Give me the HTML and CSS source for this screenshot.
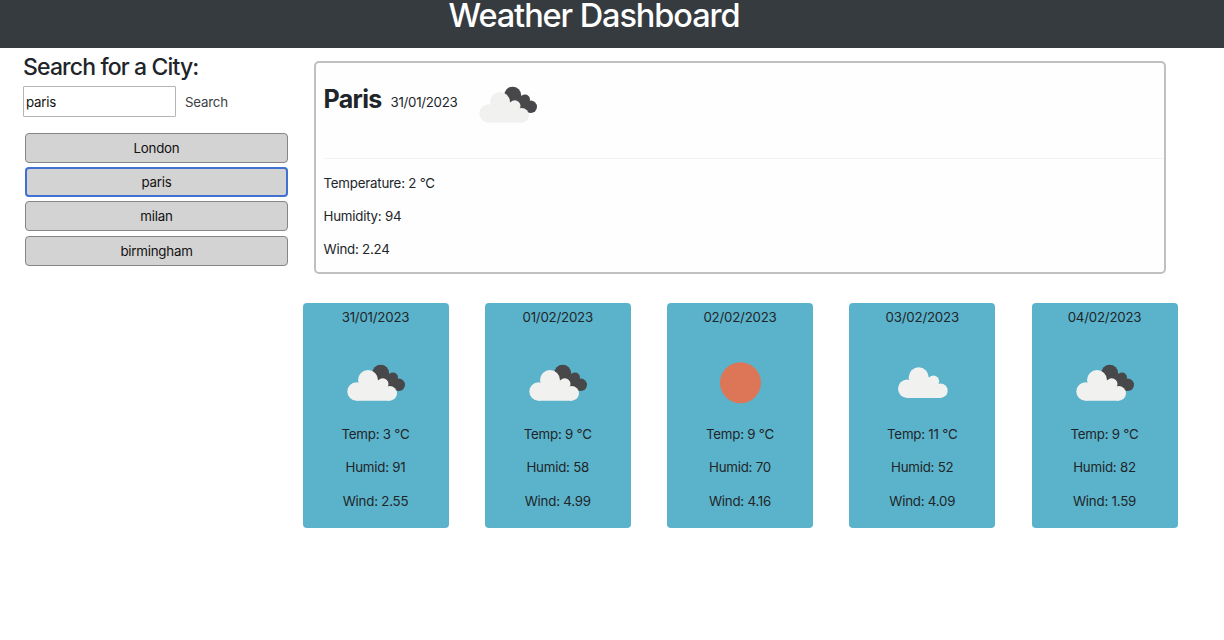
FILE: index.html
```html
<!DOCTYPE html>
<html lang="en">
<head>
<meta charset="utf-8">
<title>Weather Dashboard</title>
<link rel="stylesheet" href="styles.css">
</head>
<body>
<svg class="defs" aria-hidden="true">
  <symbol id="cloud" viewBox="0 0 83 83">
    <g fill="#f1f1ef"><circle cx="22.5" cy="50.5" r="9.2"/><circle cx="34" cy="39" r="10"/><circle cx="48.7" cy="43" r="5.8"/><circle cx="55.7" cy="52.4" r="7.3"/><path d="M22.5 59.7V44L34 38l14 2 3 7 5 5v7.7z"/></g>
  </symbol>
  <symbol id="clouds" viewBox="0 0 83 83">
    <g fill="#48484a"><circle cx="46.7" cy="32.2" r="8.5"/><circle cx="59" cy="36.5" r="5"/><circle cx="64.8" cy="43.8" r="6.2"/><path d="M43 36l10-4 6 2 5 6v9.5h-8z"/></g>
    <use href="#cloud" width="83" height="83"/>
  </symbol>
  <symbol id="sun" viewBox="0 0 83 83"><circle cx="41.5" cy="41.7" r="20.5" fill="#dc7657"/></symbol>
</svg>
<header class="header"><h1 class="title">Weather Dashboard</h1></header>
<main class="layout">
  <aside class="sidebar">
    <h2 class="search-title">Search for a City:</h2>
    <form class="search-form">
      <input class="search-input" type="text" value="paris">
      <button class="search-button" type="button">Search</button>
    </form>
    <div class="history">
      <button class="city">London</button>
      <button class="city active">paris</button>
      <button class="city">milan</button>
      <button class="city">birmingham</button>
    </div>
  </aside>
  <div class="content">
    <section class="today">
      <div class="today-head">
        <h2 class="today-city">Paris</h2>
        <span class="today-date">31/01/2023</span>
        <svg class="icon"><use href="#clouds"/></svg>
      </div>
      <div class="today-data">
        <p class="line">Temperature: 2 °C</p>
        <p class="line">Humidity: 94</p>
        <p class="line">Wind: 2.24</p>
      </div>
    </section>
    <section class="forecast">
      <article class="card"><p class="line">31/01/2023</p><svg class="icon"><use href="#clouds"/></svg><p class="line">Temp: 3 °C</p><p class="line">Humid: 91</p><p class="line">Wind: 2.55</p></article>
      <article class="card"><p class="line">01/02/2023</p><svg class="icon"><use href="#clouds"/></svg><p class="line">Temp: 9 °C</p><p class="line">Humid: 58</p><p class="line">Wind: 4.99</p></article>
      <article class="card"><p class="line">02/02/2023</p><svg class="icon"><use href="#sun"/></svg><p class="line">Temp: 9 °C</p><p class="line">Humid: 70</p><p class="line">Wind: 4.16</p></article>
      <article class="card"><p class="line">03/02/2023</p><svg class="icon" viewBox="-3.7 2.7 83 83"><use href="#cloud" width="83" height="83"/></svg><p class="line">Temp: 11 °C</p><p class="line">Humid: 52</p><p class="line">Wind: 4.09</p></article>
      <article class="card"><p class="line">04/02/2023</p><svg class="icon"><use href="#clouds"/></svg><p class="line">Temp: 9 °C</p><p class="line">Humid: 82</p><p class="line">Wind: 1.59</p></article>
    </section>
  </div>
</main>
</body>
</html>
```
FILE: styles.css
```css
* { box-sizing: border-box; }
body {
  margin: 0;
  background: #fff;
  color: #212529;
  font: 13.3px/20px Inter, "Liberation Sans", sans-serif;
  letter-spacing: -0.22px;
  white-space: nowrap;
  overflow: hidden;
}
h1, h2, p { margin: 0; }
button, input { font: inherit; letter-spacing: inherit; color: #111; }
.defs { position: absolute; width: 0; height: 0; }
.header {
  height: 48px;
  padding-right: 36px;
  border-bottom: 1px solid #363b3f;
  background: #363b3f;
  color: #fff;
  text-align: center;
}
.title { font-size: 32.5px; line-height: 32px; font-weight: 500; letter-spacing: -1.08px; }
.layout { display: flex; }
.sidebar { width: 302.5px; padding: 5px 14px 0 23px; }
.search-title { font-size: 23px; line-height: 28px; font-weight: 500; letter-spacing: -0.85px; }
.search-form { display: flex; margin-top: 5px; }
.search-input {
  width: 153px;
  height: 31px;
  padding: 0 2px;
  border: 1px solid #b5b5b5;
  border-radius: 1px;
  background: #fff;
}
.search-button { padding: 0; margin-left: 9px; border: 0; background: none; color: #3b3f43; }
.history { display: flex; flex-direction: column; gap: 4.2px; padding: 16px 0 0 2px; }
.city {
  width: 263px;
  height: 30px;
  padding: 0;
  border: 1px solid #858585;
  border-radius: 4px;
  background: #d3d3d3;
}
.city.active { border: 2px solid #3f70d2; }
.content { width: 875px; }
.today {
  width: 852px;
  height: 213px;
  margin: 13px 0 0 11.5px;
  border: 2px solid #c0c0c0;
  border-radius: 5px;
  background: #fefefe;
  padding-left: 7.5px;
}
.today-head {
  display: flex;
  height: 96px;
  border-bottom: 1px solid #f3f3f3;
}
.today-city { font-size: 25px; line-height: 30px; font-weight: 700; letter-spacing: -0.7px; margin-top: 21px; }
.today-date { margin: 29px 0 0 9px; letter-spacing: -0.3px; }
.today-head .icon { margin: -0.5px 0 0 9px; }
.today-data { display: flex; flex-direction: column; gap: 13.3px; padding-top: 13.7px; }
.icon { width: 83px; height: 83px; flex: none; }
.forecast { display: flex; justify-content: space-between; margin-top: 29px; }
.card {
  width: 146px;
  height: 225px;
  padding-top: 4px;
  display: flex;
  flex-direction: column;
  align-items: center;
  gap: 13.3px;
  border-radius: 4px;
  background: #5ab3ca;
}
.card .icon { margin: 1px 0 -13.6px; }
```
